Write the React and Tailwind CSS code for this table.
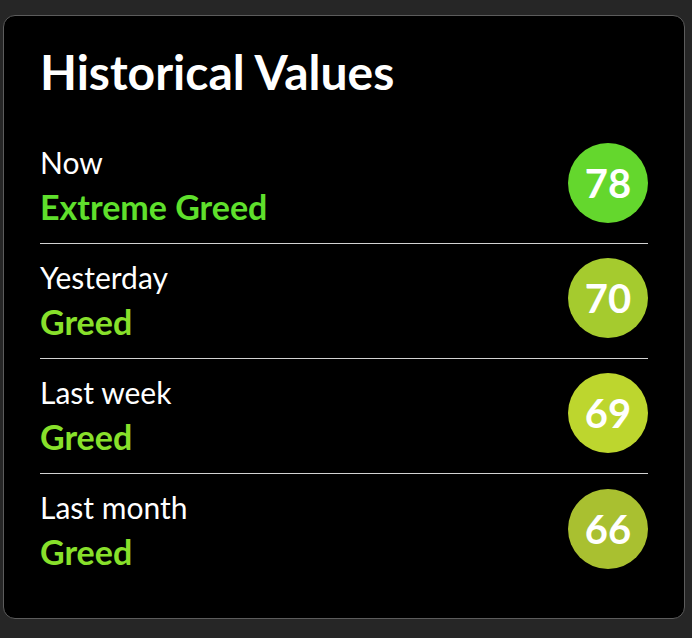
export default function App() {
  const rows = [
    { label: "Now", status: "Extreme Greed", statusColor: "text-[#5fe02c]", value: 78, circle: "bg-[#64d72d]" },
    { label: "Yesterday", status: "Greed", statusColor: "text-[#88e02b]", value: 70, circle: "bg-[#a5cb2e]" },
    { label: "Last week", status: "Greed", statusColor: "text-[#88e02b]", value: 69, circle: "bg-[#bdd62e]" },
    { label: "Last month", status: "Greed", statusColor: "text-[#88e02b]", value: 66, circle: "bg-[#a9c030]" },
  ];
  return (
    <div className="min-h-[638px] w-[692px] bg-[#262626] pt-[15px] pl-[3px] font-['Lato','Liberation_Sans',sans-serif]">
      <div className="w-[682px] h-[604px] rounded-[12px] border border-[#5c5c5c] bg-black px-[36px]">
        <h1 className="mt-[32px] text-[48px] leading-[48px] font-bold text-white">Historical Values</h1>
        <div className="mt-[33px] flex flex-col">
          {rows.map((r, i) => (
            <div
              key={r.label}
              className={
                "flex h-[115px] items-center justify-between pt-[14px] pb-[20px] " +
                (i < rows.length - 1 ? "border-b border-[#d2d2d2]" : "")
              }
            >
              <div className="mt-[4px] flex flex-col">
                <span className="text-[30px] leading-[33px] text-white">{r.label}</span>
                <span className={"mt-[9px] text-[34px] leading-[37px] font-bold " + r.statusColor}>{r.status}</span>
              </div>
              <div className={"w-[80px] h-[80px] rounded-full flex items-center justify-center " + r.circle}>
                <span className="text-[40px] leading-none font-bold text-white">{r.value}</span>
              </div>
            </div>
          ))}
        </div>
      </div>
    </div>
  );
}
